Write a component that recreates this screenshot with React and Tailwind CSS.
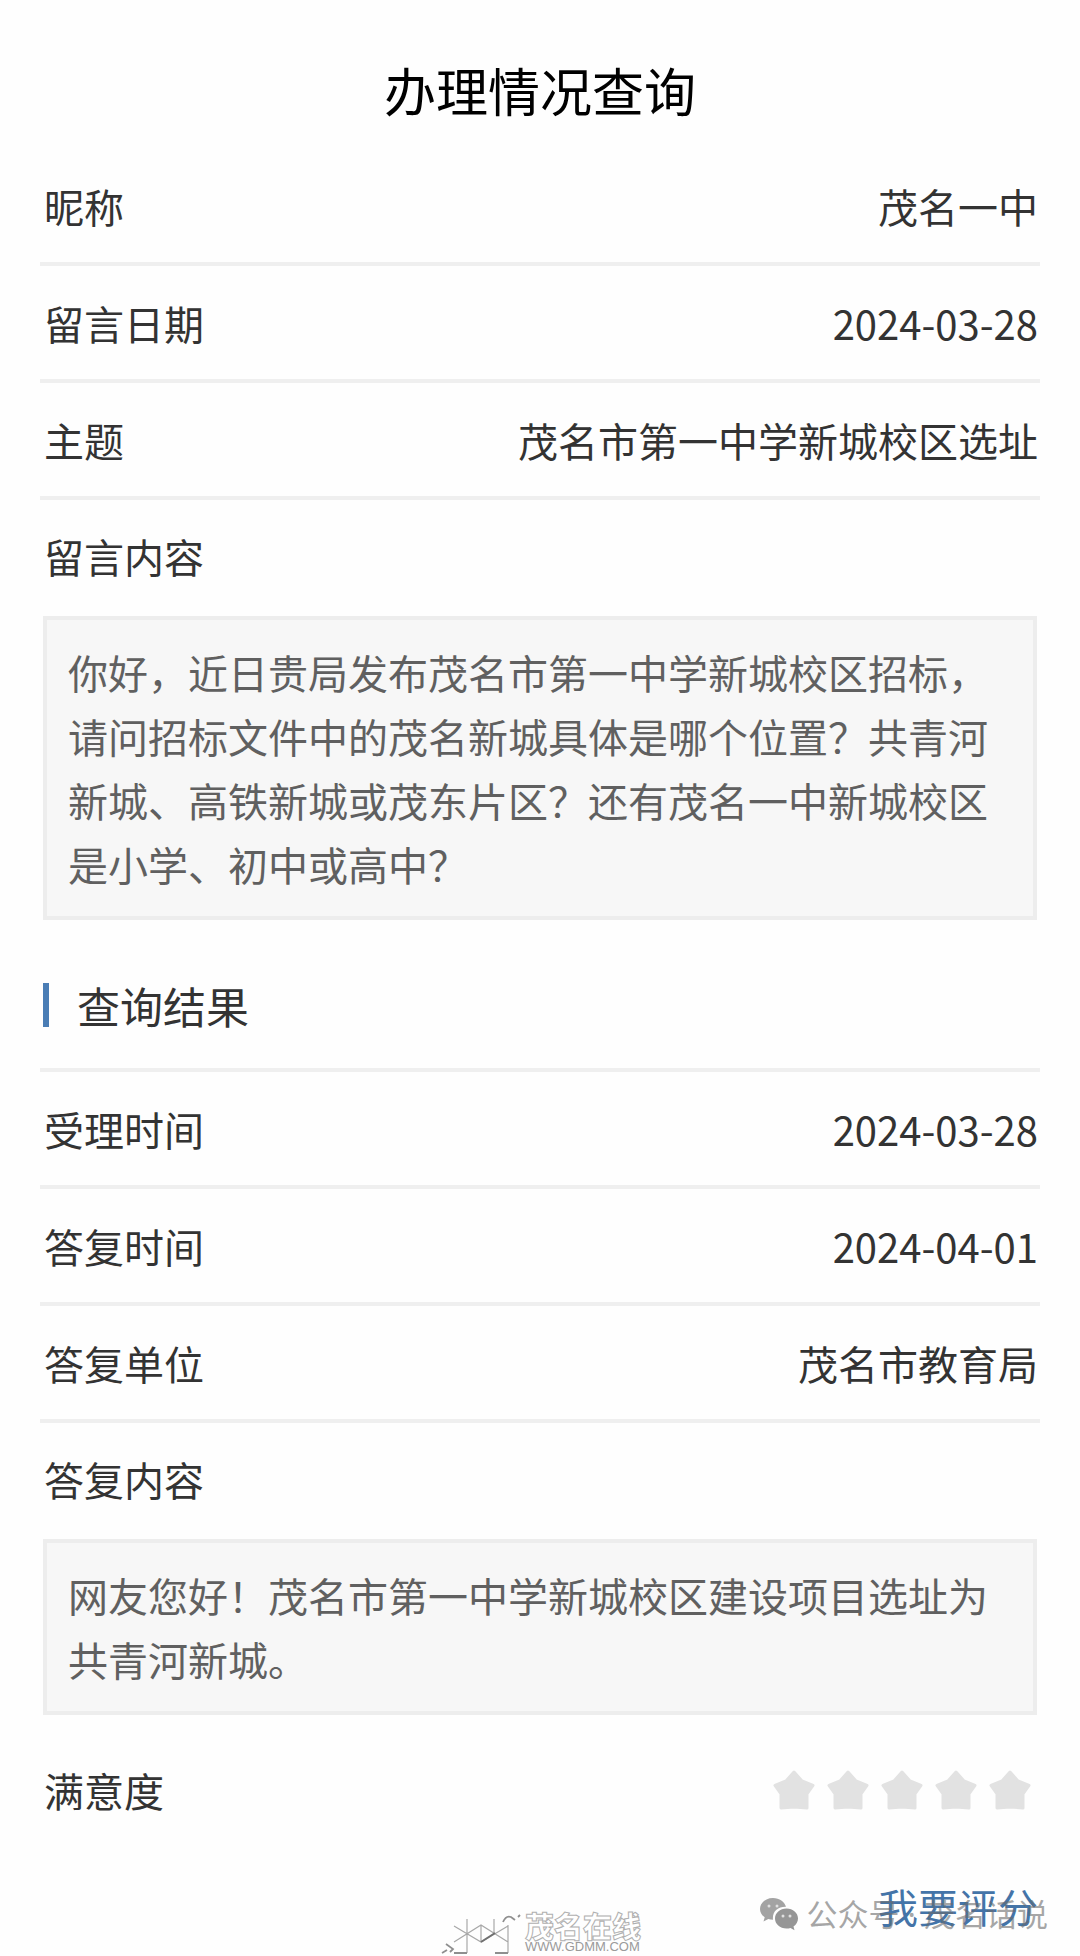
const QUESTION_ROWS = [
  { label: "昵称", value: "茂名一中" },
  { label: "留言日期", value: "2024-03-28" },
  { label: "主题", value: "茂名市第一中学新城校区选址" },
];

const REPLY_ROWS = [
  { label: "受理时间", value: "2024-03-28" },
  { label: "答复时间", value: "2024-04-01" },
  { label: "答复单位", value: "茂名市教育局" },
];

const QUESTION =
  "你好，近日贵局发布茂名市第一中学新城校区招标，请问招标文件中的茂名新城具体是哪个位置？共青河新城、高铁新城或茂东片区？还有茂名一中新城校区是小学、初中或高中？";

const REPLY = "网友您好！茂名市第一中学新城校区建设项目选址为共青河新城。";

function Rows({ rows }) {
  return (
    <dl>
      {rows.map((r) => (
        <div
          key={r.label}
          className="flex h-[117px] items-center justify-between border-b-4 border-[#efefef] pr-0.5 pl-1"
        >
          <dt>{r.label}</dt>
          <dd>{r.value}</dd>
        </div>
      ))}
    </dl>
  );
}

function Message({ title, text }) {
  return (
    <section>
      <h3 className="flex h-[116px] items-center pb-1 pl-1">{title}</h3>
      <p className="mx-[3px] border-4 border-[#ededed] bg-[#f7f7f7] px-[21px] py-5 leading-[64px] text-[#606060]">
        {text}
      </p>
    </section>
  );
}

function Star() {
  return (
    <svg viewBox="0 0 44 44" className="size-11" fill="#e2e2e2" stroke="#e2e2e2" strokeWidth="3" strokeLinejoin="round">
      <path d="M22 4 L30 13 L41 17.5 L35 26 L35 40 L22 39 L9 40 L9 26 L3 17.5 L14 13 Z" />
    </svg>
  );
}

function WechatIcon() {
  return (
    <svg viewBox="0 0 40 34" className="w-10 shrink-0">
      <path
        fill="#a3a3a3"
        d="M14 1C6.500 1 1 6 1 12c0 3.500 1.800 6.300 4.700 8.300L4.500 24.500l4.800-2.500c1.500.4 3 .7 4.700.7C13 14.500 19 9.500 27 9.800 25.500 4.500 20.500 1 14 1z"
      />
      <path
        fill="#969696"
        d="M27.500 11.500C21 11.500 16 16 16 21.500S21 31.500 27.500 31.500c1.400 0 2.700-.2 4-.6l4 2.300-1-3.700c2.700-1.900 4.500-4.700 4.500-8C39 16 34 11.500 27.500 11.500z"
      />
      <g fill="#e0e0e0">
        <circle cx="10" cy="9" r="1.500" />
        <circle cx="18" cy="9" r="1.500" />
        <circle cx="24" cy="19" r="1.500" />
        <circle cx="31" cy="19" r="1.500" />
      </g>
    </svg>
  );
}

function SiteLogo() {
  return (
    <svg viewBox="0 0 80 44" className="w-20 shrink-0" fill="none" stroke="#a8a8a8" strokeWidth="1.200">
      <path d="M13 14 L40 30 L67 14 M13 30 L40 13 L67 30 M26 7 V41 M40 13 V30 M53 7 V23 M67 13 V41" />
      <path d="M40 30 L54 21" stroke="#707070" strokeWidth="2" />
      <path d="M13 41 H26 M54 41 H67 M1 41 l5 -3 M5 32 l7 5 l-3 3 M62 10 q3 -7 8 -5 l4 3 M77 5 l2 -2" stroke="#8f8f8f" strokeWidth="1.800" />
    </svg>
  );
}

export default function App() {
  return (
    <div className="relative bg-[#fefefe] px-10 pb-5 font-['Noto_Sans_CJK_SC',sans-serif] text-[40px] leading-[60px] text-[#333333]">
      <h1 className="pt-[54px] pb-[23px] text-center text-[52px] leading-[72px] text-black">
        办理情况查询
      </h1>

      <Rows rows={QUESTION_ROWS} />
      <Message title="留言内容" text={QUESTION} />

      <h2 className="mt-8 flex h-[120px] items-center border-b-4 border-[#efefef] pb-2.5 pl-[3px] text-[43px]">
        <span className="mr-7 h-11 w-1.5 bg-[#4a7db5]" />
        查询结果
      </h2>
      <Rows rows={REPLY_ROWS} />
      <Message title="答复内容" text={REPLY} />

      <div className="mt-4 flex h-[117px] items-center justify-between pl-1">
        <span>满意度</span>
        <div className="flex gap-2.5 pr-2" role="img" aria-label="满意度 0 / 5">
          {[1, 2, 3, 4, 5].map((n) => (
            <Star key={n} />
          ))}
        </div>
      </div>

      <div className="flex h-[88px] items-end justify-end pr-0.5">
        <a href="#rate" className="text-[#4474a8]">我要评分</a>
      </div>

      {/* Watermarks, stamped over the foot of the page */}
      <div className="pointer-events-none absolute right-8 bottom-5 flex items-center gap-2 font-['Noto_Sans','Noto_Sans_CJK_SC',sans-serif] text-[31px] leading-[44px] whitespace-nowrap text-[#6b6b6b]/60">
        <WechatIcon />
        公众号 · 茂名话说
      </div>
      <div className="pointer-events-none absolute bottom-0 left-[441px] flex items-end gap-1 text-[#9a9a9a]">
        <SiteLogo />
        <div className="pb-0.5">
          <div className="text-[29px] leading-[30px] font-black text-white [-webkit-text-stroke:1px_#b0b0b0]">
            茂名在线
          </div>
          <div className="font-['Liberation_Sans',sans-serif] text-[13px] leading-[14px]">WWW.GDMM.COM</div>
        </div>
      </div>
    </div>
  );
}
